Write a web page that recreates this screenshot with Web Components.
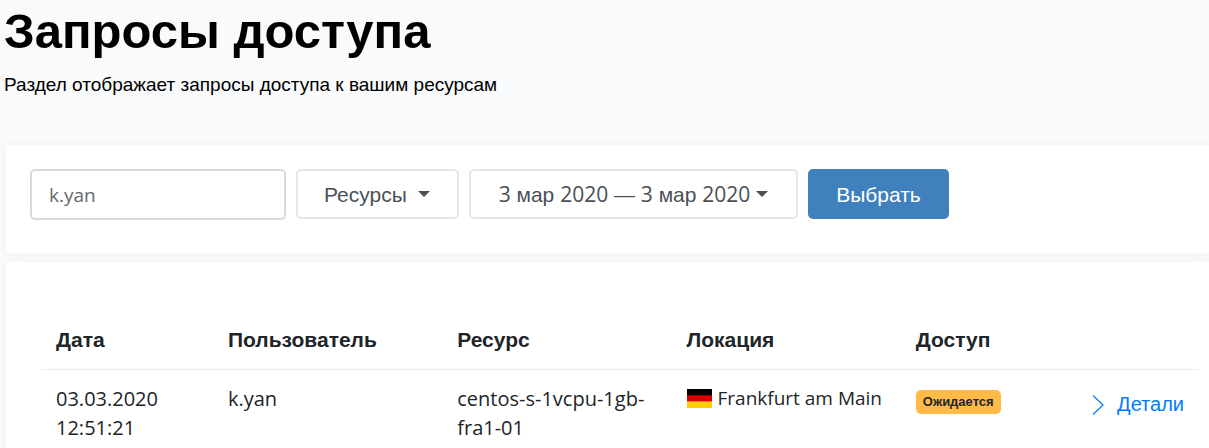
<!DOCTYPE html>
<html lang="ru">
<head>
<meta charset="utf-8">
<meta name="viewport" content="width=device-width, initial-scale=1">
<title>Запросы доступа</title>
<style>
  body { margin: 0; background: #f9fafc; font: 21px/29px "Liberation Sans", Arial, sans-serif; color: #212529; --latin: "Open Sans", "Noto Sans", sans-serif; }
</style>
</head>
<body>
<access-page></access-page>
<script>
const define = (name, html) => customElements.define(name, class extends HTMLElement {
  constructor() {
    super();
    const t = document.createElement('template');
    t.innerHTML = html;
    this.attachShadow({ mode: 'open' }).append(t.content.cloneNode(true));
  }
});

define('page-heading', `
<style>
  :host { display: block; color: #000; padding: 0 4px; }
  h1 { margin: 0; font-size: 49px; line-height: 62px; font-weight: 700; }
  p { margin: 8px 0 0; font-size: 19px; line-height: 29px; }
</style>
<h1><slot name="title"></slot></h1>
<p><slot></slot></p>`);

define('content-card', `
<style>
  :host { display: block; background: #fff; border-radius: 3px 0 0 3px; box-shadow: 0 0 12px rgba(80,55,0,.04); }
</style>
<slot></slot>`);

define('filter-bar', `
<style>
  :host { display: block; padding: 24px 24px 33px; }
  form { display: flex; flex-wrap: wrap; align-items: flex-start; gap: 10px; }
  input, select, button { box-sizing: border-box; height: 50px; margin: 0; border: 2px solid #e6e6e6; border-radius: 5px; background: #fff; color: #495057; font: inherit; }
  input { width: 256px; height: 51px; padding: 0 17px; border-color: #d9d9d9; color: #62686e; font: 400 19px/29px var(--latin); }
  .drop { position: relative; display: flex; }
  select { appearance: none; width: 163px; padding: 0 26px; }
  .caret { width: 12px; height: 6px; fill: #495057; }
  .drop .caret { position: absolute; right: 29px; top: 22px; pointer-events: none; }
  .range { display: flex; align-items: center; justify-content: center; gap: 6px; width: 329px; padding: 0; white-space: nowrap; }
  .num { font: 400 21px/29px var(--latin); }
  .submit { width: 141px; padding: 0; border: 0; background: #4081bd; color: #fff; }
</style>
<form>
  <input type="text" value="k.yan" aria-label="Пользователь">
  <span class="drop"><select aria-label="Ресурсы"><option>Ресурсы</option></select>
    <svg class="caret" viewBox="0 0 12 6" aria-hidden="true"><path d="M0 0h12L6 6z"/></svg></span>
  <button type="button" class="range" aria-haspopup="dialog"><span><span class="num">3</span> мар <span class="num">2020</span> — <span class="num">3</span> мар <span class="num">2020</span></span>
    <svg class="caret" viewBox="0 0 12 6" aria-hidden="true"><path d="M0 0h12L6 6z"/></svg></button>
  <button type="button" class="submit">Выбрать</button>
</form>`);

define('status-badge', `
<style>
  :host { display: inline-block; padding: 0 7px; border-radius: 5px; background: #ffba48; color: #212529; font-size: 13px; line-height: 24px; font-weight: 700; vertical-align: top; }
</style>
<slot></slot>`);

define('flag-germany', `
<style>
  :host { display: inline-block; flex: none; width: 25px; height: 19px; }
  svg { display: block; width: 100%; height: 100%; }
</style>
<svg viewBox="0 0 25 19" role="img" aria-label="Германия"><path fill="#000" d="M0 0h25v7H0z"/><path fill="#d00" d="M0 6.33h25v6.34H0z"/><path fill="#ffce00" d="M0 12.67h25V19H0z"/></svg>`);

define('details-link', `
<style>
  :host { display: block; }
  a { display: flex; align-items: center; justify-content: flex-end; gap: 13px; color: #007bff; text-decoration: none; }
  svg { width: 12px; height: 20px; fill: none; stroke: currentColor; stroke-width: 1.2; }
</style>
<a href="#details"><svg viewBox="0 0 12 20" aria-hidden="true"><path d="M1 .5l10 9.5L1 19.5"/></svg><slot></slot></a>`);

define('requests-table', `
<style>
  :host { display: block; padding: 48px 10px 0 35px; }
  table { width: 100%; table-layout: fixed; border-collapse: collapse; }
  th, td { padding: 15px; text-align: left; vertical-align: top; }
  th { font-weight: 700; border-bottom: 1px solid #eaebec; }
  td { padding-top: 14px; font: 400 20px/29px var(--latin); }
  .date { width: 14.85%; } .col { width: 19.8%; }
  .place { display: flex; gap: 6px; font-size: 19px; white-space: nowrap; }
  flag-germany { margin-top: 5px; }
  .date-cell { padding-right: 50px; }
  status-badge { font-family: "Liberation Sans", Arial, sans-serif; margin-top: 6px; }
  details-link { font: 20px/29px "Liberation Sans", Arial, sans-serif; margin-top: 6px; }
</style>
<table>
  <colgroup><col class="date"><col class="col"><col class="col"><col class="col"><col class="date"><col></colgroup>
  <thead><tr><th scope="col">Дата</th><th scope="col">Пользователь</th><th scope="col">Ресурс</th><th scope="col">Локация</th><th scope="col">Доступ</th><th></th></tr></thead>
  <tbody><tr>
    <td class="date-cell">03.03.2020 12:51:21</td><td>k.yan</td><td>centos-s-1vcpu-1gb-fra1-01</td>
    <td><span class="place"><flag-germany></flag-germany>Frankfurt am Main</span></td>
    <td><status-badge>Ожидается</status-badge></td>
    <td><details-link>Детали</details-link></td>
  </tr></tbody>
</table>`);

define('access-page', `
<style>
  :host { display: block; overflow: hidden; }
  main { display: grid; gap: 9px; margin: 46px 0 0 6px; }
</style>
<page-heading><span slot="title">Запросы доступа</span>Раздел отображает запросы доступа к вашим ресурсам</page-heading>
<main>
  <content-card><filter-bar></filter-bar></content-card>
  <content-card><requests-table></requests-table></content-card>
</main>`);
</script>
</body>
</html>
